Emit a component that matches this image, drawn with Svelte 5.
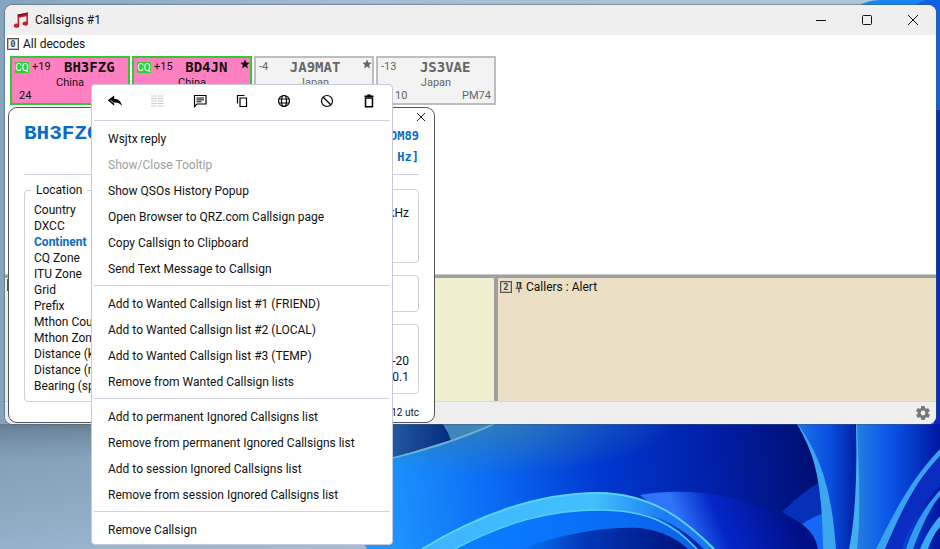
<script>
	/* --------------- decoded callsigns --------------- */
	let decodes = [
		{ call: 'BH3FZG', snr: '+19', country: 'China', zone: '24', grid: '', cq: true, star: false },
		{ call: 'BD4JN', snr: '+15', country: 'China', zone: '', grid: '', cq: true, star: true },
		{ call: 'JA9MAT', snr: '-4', country: 'Japan', zone: '', grid: '', cq: false, star: true },
		{ call: 'JS3VAE', snr: '-13', country: 'Japan', zone: '10', grid: 'PM74', cq: false, star: false },
	];

	let location = [
		'Country',
		'DXCC',
		'Continent',
		'CQ Zone',
		'ITU Zone',
		'Grid',
		'Prefix',
		'Mthon Country',
		'Mthon Zone',
		'Distance (km)',
		'Distance (mi)',
		'Bearing (sp)',
	];

	/* --------------- context menu --------------- */
	let tools = ['reply', 'columns', 'message', 'copy', 'globe', 'block', 'trash'];

	let groups = [
		[
			'Wsjtx reply',
			'Show/Close Tooltip',
			'Show QSOs History Popup',
			'Open Browser to QRZ.com Callsign page',
			'Copy Callsign to Clipboard',
			'Send Text Message to Callsign',
		],
		[
			'Add to Wanted Callsign list #1 (FRIEND)',
			'Add to Wanted Callsign list #2 (LOCAL)',
			'Add to Wanted Callsign list #3 (TEMP)',
			'Remove from Wanted Callsign lists',
		],
		[
			'Add to permanent Ignored Callsigns list',
			'Remove from permanent Ignored Callsigns list',
			'Add to session Ignored Callsigns list',
			'Remove from session Ignored Callsigns list',
		],
		['Remove Callsign'],
	];
	let disabled = ['columns', 'Show/Close Tooltip'];
</script>

<div class="desktop">
	<!--------------- wallpaper --------------->
	<svg class="wallpaper" viewBox="0 0 940 549" preserveAspectRatio="none" aria-hidden="true">
		<defs>
			<linearGradient id="sky" x1="0" y1="0" x2="1" y2="0">
				<stop offset="0" stop-color="#86a5bd" />
				<stop offset="0.4" stop-color="#a5bdd4" />
				<stop offset="1" stop-color="#b4c6d6" />
			</linearGradient>
			<linearGradient id="shade" x1="0" y1="424" x2="0" y2="549" gradientUnits="userSpaceOnUse">
				<stop offset="0" stop-color="#5d7386" stop-opacity="0.8" />
				<stop offset="0.3" stop-color="#7f9ab2" stop-opacity="0.4" />
				<stop offset="1" stop-color="#a5bdd8" stop-opacity="0.5" />
			</linearGradient>
			<linearGradient id="bloom" x1="380" y1="500" x2="820" y2="440" gradientUnits="userSpaceOnUse">
				<stop offset="0" stop-color="#1e98ff" />
				<stop offset="0.25" stop-color="#0b6cf4" />
				<stop offset="0.5" stop-color="#0038d0" />
				<stop offset="0.75" stop-color="#0020a8" />
				<stop offset="1" stop-color="#000d70" />
			</linearGradient>
			<radialGradient id="top" cx="0" cy="0" r="1" gradientUnits="userSpaceOnUse" gradientTransform="translate(480 420) scale(200 55)">
				<stop offset="0" stop-color="#3a84a8" stop-opacity="0.8" />
				<stop offset="1" stop-color="#3a84a8" stop-opacity="0" />
			</radialGradient>
			<linearGradient id="ring" x1="420" y1="549" x2="710" y2="549" gradientUnits="userSpaceOnUse">
				<stop offset="0" stop-color="#3fb4ff" />
				<stop offset="0.6" stop-color="#41c0fb" />
				<stop offset="0.85" stop-color="#1d7af4" />
				<stop offset="1" stop-color="#1c78f0" />
			</linearGradient>
			<linearGradient id="inner" x1="480" y1="549" x2="690" y2="549" gradientUnits="userSpaceOnUse">
				<stop offset="0" stop-color="#0a7dff" />
				<stop offset="0.5" stop-color="#0870f8" />
				<stop offset="1" stop-color="#0b62e8" />
			</linearGradient>
			<linearGradient id="core" x1="520" y1="549" x2="680" y2="549" gradientUnits="userSpaceOnUse">
				<stop offset="0" stop-color="#0978fb" />
				<stop offset="0.4" stop-color="#0238b8" />
				<stop offset="1" stop-color="#001480" />
			</linearGradient>
			<linearGradient id="fold" x1="690" y1="549" x2="790" y2="510" gradientUnits="userSpaceOnUse">
				<stop offset="0" stop-color="#2f74fa" />
				<stop offset="0.35" stop-color="#0426c8" />
				<stop offset="1" stop-color="#000f88" />
			</linearGradient>
			<linearGradient id="petal" x1="800" y1="0" x2="860" y2="0" gradientUnits="userSpaceOnUse">
				<stop offset="0" stop-color="#1a70e8" />
				<stop offset="0.5" stop-color="#0a4ee0" />
				<stop offset="1" stop-color="#001a9c" />
			</linearGradient>
			<linearGradient id="petal2" x1="856" y1="0" x2="940" y2="0" gradientUnits="userSpaceOnUse">
				<stop offset="0" stop-color="#2480e0" />
				<stop offset="0.4" stop-color="#0a55ea" />
				<stop offset="1" stop-color="#0016a0" />
			</linearGradient>
			<linearGradient id="flake" x1="393" y1="0" x2="450" y2="0" gradientUnits="userSpaceOnUse">
				<stop offset="0" stop-color="#2258a0" />
				<stop offset="1" stop-color="#062c80" />
			</linearGradient>
		</defs>
		<rect width="940" height="549" fill="url(#sky)" />
		<rect y="424" width="940" height="125" fill="url(#shade)" />
		<path d="M858 6 Q868 0 880 0 H940 V424 H930 V6Z" fill="#1687f2" />
		<path d="M912 6 L926 0 H940 V424 H936 V20Z" fill="#0b62e6" />
		<path d="M934 110 H940 V424 H934Z" fill="#0a2cb8" />
		<path d="M380 424 H443 Q448 431 451 440 L380 462Z" fill="url(#flake)" />
		<path d="M443 424 H492 L451 440 Q448 431 443 424Z" fill="#3f86bd" />
		<path d="M360 465 L380 461 Q446 446 494 424 H940 V549 H367 Q355 530 360 465Z" fill="url(#bloom)" />
		<path d="M380 461 Q446 446 494 424 H690 V480 H380Z" fill="url(#top)" />
		<path d="M380 461 Q446 446 494 424" fill="none" stroke="#63b9d4" stroke-width="1.5" />
		<path d="M640 495 C700 485 745 500 780 515 C812 528 817 545 818 549 H705 Z" fill="url(#fold)" />
		<path d="M422 549 C470 520 530 493 598 493 C655 493 690 525 714 549Z" fill="url(#ring)" />
		<path d="M455 549 C505 522 550 510 600 510 C650 510 675 526 697 549Z" fill="url(#inner)" />
		<path d="M520 549 C560 535 600 526 640 528 C664 531 678 540 688 549Z" fill="url(#core)" />
		<path d="M643 513 C670 520 690 535 704 549 L697 549 C682 530 665 519 643 513Z" fill="#0426b0" />
		<path d="M422 549 C470 520 530 493 598 493 C655 493 690 525 714 549" fill="none" stroke="#5bd4fb" stroke-width="2" />
		<path d="M455 549 C505 522 550 510 600 510 C650 510 675 526 697 549" fill="none" stroke="#55cdfb" stroke-width="1.5" />
		<path d="M782 512 Q802 492 820 482 L824 513 Q812 517 802 524Z" fill="#0730b8" />
		<path d="M802 524 Q812 517 824 513 L830 549 H818 Q816 535 802 524Z" fill="#1766fa" />
		<path d="M797 424 C820 455 828 490 835 549 H852 C858 510 858 465 855 424Z" fill="url(#petal)" />
		<path d="M797 424 C815 455 822 480 823 549 H836 C832 500 826 465 798 424Z" fill="#3ba7ee" />
		<path d="M856 424 H940 V549 H852 C860 510 858 465 856 424Z" fill="url(#petal2)" />
		<path d="M856 424 C857 470 856 515 849 549 H857 C861 515 859 470 857 424Z" fill="#42b0ef" />
		<path d="M940 449 C910 480 893 515 876 549 H885 C898 520 912 485 940 456Z" fill="#3aa0f0" />
		<path d="M940 456 C912 485 898 520 885 549 H902 C910 524 922 505 940 486Z" fill="#0a2cc0" />
		<path d="M940 490 C924 508 914 525 906 549 H913 C922 525 930 508 940 496Z" fill="#339cf2" />
		<path d="M940 516 C932 525 926 535 920 549 H928 C932 538 936 531 940 527Z" fill="#3da8f5" />
	</svg>

	<main class="window">
		<header class="titlebar">
			<svg class="logo" viewBox="0 0 16 16" aria-hidden="true">
				<path d="M4.6 2.6 15 .6v10.8a2.7 2 0 1 1-1.6-1.7V4.3l-7.2 1.5v7.6a2.7 2 0 1 1-1.6-1.6Z" fill="#c3202c" />
				<path d="M4.6 2.6 15 .6v1.6L4.6 4.4Z" fill="#8c1420" />
			</svg>
			<h1>Callsigns #1</h1>
			<div class="controls">
				<button aria-label="Minimize"><svg viewBox="0 0 12 12"><path d="M1 6.5h10" /></svg></button>
				<button aria-label="Maximize"><svg viewBox="0 0 12 12"><rect x="1.5" y="1.5" width="9" height="9" rx="1" /></svg></button>
				<button aria-label="Close"><svg viewBox="0 0 12 12"><path d="m1 1 10 10M11 1 1 11" /></svg></button>
			</div>
		</header>

		<section class="pane decodes">
			<h2><span class="num">0</span>All decodes</h2>
			<div class="cards">
				{#each decodes as d (d.call)}
					<button class="card" class:cq={d.cq}>
						<span class="line">
							{#if d.cq}<span class="badge">CQ</span>{/if}
							<span>{d.snr}</span>
							<strong>{d.call}</strong>
							{#if d.star}
								<span class="star">
									<svg viewBox="0 0 10 10"><path d="m5 .3 1.3 3.1 3.4.3-2.6 2.2.8 3.5L5 7.6 2.1 9.4l.8-3.5L.3 3.7l3.4-.3Z" /></svg>
								</span>
							{/if}
						</span>
						<span class="country">{d.country}</span>
						<span class="foot" class:indent={d.grid}><span>{d.zone}</span><span>{d.grid}</span></span>
					</button>
				{/each}
			</div>
		</section>

		<div class="split">
			<section class="pane calling"><h2><span class="num">1</span></h2></section>
			<section class="pane callers">
				<h2>
					<span class="num">2</span>
					<svg class="pin" viewBox="0 0 8 11"><path d="M1.5.7h5M2.3.7v5M5.7.7v5M5 .7v5M.6 6.2h6.8M4 6.2v4.3" /></svg>
					Callers : Alert
				</h2>
			</section>
		</div>

		<footer class="status">
			<button aria-label="Settings">
				<svg viewBox="2 2 20 20"><path d="M19.4 13c0-.3.1-.7.1-1s0-.7-.1-1l2.1-1.6c.2-.2.2-.4.1-.6l-2-3.5c-.1-.2-.4-.3-.6-.2l-2.5 1c-.5-.4-1.1-.7-1.7-1l-.4-2.6c0-.3-.2-.5-.5-.5h-4c-.2 0-.4.2-.5.4l-.4 2.7c-.6.2-1.1.6-1.7 1l-2.5-1c-.2-.1-.5 0-.6.2l-2 3.5c-.1.2-.1.4.1.6L4.6 11c0 .3-.1.7-.1 1s0 .7.1 1l-2.1 1.6c-.2.2-.2.4-.1.6l2 3.5c.1.2.4.3.6.2l2.5-1c.5.4 1.1.7 1.7 1l.4 2.6c0 .3.2.5.5.5h4c.3 0 .5-.2.5-.4l.4-2.7c.6-.2 1.2-.6 1.7-1l2.5 1c.2.1.5 0 .6-.2l2-3.5c.1-.2.1-.4-.1-.6ZM12 15.5a3.5 3.5 0 1 1 0-7 3.5 3.5 0 0 1 0 7Z" /></svg>
			</button>
		</footer>
	</main>

	<!--------------- callsign tooltip --------------->
	<aside class="tooltip">
		<button class="close" aria-label="Close tooltip"><svg viewBox="0 0 10 10"><path d="m1 1 8 8M9 1 1 9" /></svg></button>
		<div class="head">
			<h3>BH3FZG</h3>
			<p>OM89<br />0 Hz]</p>
		</div>
		<div class="body">
			<fieldset class="location">
				<legend>Location</legend>
				{#each location as row (row)}
					<div class:wanted={row === 'Continent'}>{row}</div>
				{/each}
			</fieldset>
			<div class="side">
				<div class="box freq">kHz</div>
				<div class="box blank"></div>
				<div class="box report">-20<br />0.1</div>
			</div>
		</div>
		<small>12 utc</small>
	</aside>

	<!--------------- context menu --------------->
	<nav class="menu">
		<div class="tools">
			{#each tools as tool (tool)}
				<button aria-label={tool} disabled={disabled.includes(tool)}>
					<svg viewBox="0 0 16 16">
						{#if tool === 'reply'}
							<path class="fill" d="M7.2 2.5v3.2c4.3.3 6.9 2.7 7.8 7.3-1.9-2.7-4.3-3.7-7.8-3.5v3.3L.8 7.3Z" />
							<path d="M3.5 7.2 8 11" stroke="#fff" stroke-width=".8" />
						{:else if tool === 'columns'}
							<path d="M2 3h5.5M2 5.5h5.5M2 8h5.5M2 10.5h5.5M2 13h5.5M9 3h5.5M9 5.5h5.5M9 8h5.5M9 10.5h5.5M9 13h5.5" />
						{:else if tool === 'message'}
							<path d="M2.5 13.5v-11h11.5v8.5H5Z" />
							<path d="M4.5 5h7.5M4.5 6.9h7.5M4.5 8.8h5" stroke-width="1" />
						{:else if tool === 'copy'}
							<path d="M3.5 10.5V2.5h7M6 5h6.5v8.5H6Z" />
						{:else if tool === 'globe'}
							<circle cx="8" cy="8" r="5.5" />
							<ellipse cx="8" cy="8" rx="2.5" ry="5.5" />
							<path d="M3 6h10M3 10h10" />
						{:else if tool === 'block'}
							<circle cx="8" cy="8" r="5.5" />
							<path d="m4 4 8 8" />
						{:else}
							<path d="M3.5 3.2h9M6.2 2.2h3.6" stroke-width="1.5" />
							<path d="M4.5 5h7v8.8h-7Z" stroke-width="1.5" />
						{/if}
					</svg>
				</button>
			{/each}
		</div>
		{#each groups as group}
			<hr />
			{#each group as item (item)}
				<button class="item" disabled={disabled.includes(item)}>{item}</button>
			{/each}
		{/each}
	</nav>
</div>

<style>
	:global(body) {
		margin: 0;
	}

	.desktop {
		position: relative;
		box-sizing: border-box;
		display: flex;
		min-height: 100vh;
		padding: 5px 4px 125px 5px;
		overflow: hidden;
		font-family: Roboto, 'Open Sans', sans-serif;
		font-size: 12px;
		line-height: 16px;
		color: #111;
	}

	.wallpaper {
		position: absolute;
		inset: 0;
		width: 100%;
		height: 100%;
	}

	h1,
	h2,
	h3,
	p {
		margin: 0;
		font-size: 12px;
		font-weight: 400;
	}

	button {
		padding: 0;
		border: none;
		background: none;
		color: inherit;
		font: inherit;
	}

	svg {
		display: block;
		flex: none;
	}

	/* --------------- window --------------- */
	.window {
		position: relative;
		display: flex;
		flex: 1;
		flex-direction: column;
		overflow: hidden;
		border-radius: 8px;
		background: #fff;
		box-shadow: 0 0 1px 1px rgba(70, 90, 110, 0.5);
	}

	.titlebar {
		display: flex;
		align-items: center;
		height: 30px;
		padding-left: 8px;
		background: #efefef;
	}

	.logo {
		width: 16px;
		height: 16px;
		margin-right: 6px;
	}

	.controls {
		display: flex;
		margin-left: auto;
	}

	.controls button {
		display: grid;
		place-items: center;
		width: 46px;
		height: 28px;
	}

	.controls svg {
		width: 12px;
		height: 12px;
		fill: none;
		stroke: #111;
	}

	.pane h2 {
		display: flex;
		align-items: center;
		gap: 4px;
		padding: 1px 2px 0;
	}

	.num {
		box-sizing: border-box;
		width: 12px;
		height: 12px;
		border: 1px solid #555;
		outline: 1px solid #bbb;
		outline-offset: -2px;
		color: #444;
		font: bold 9px/10px 'DejaVu Sans Mono', monospace;
		text-align: center;
	}

	.decodes {
		flex: 1;
		border-bottom: 1px solid #ccc;
	}

	.cards {
		display: flex;
		flex-wrap: wrap;
		gap: 2px;
		padding: 4px 5px;
	}

	.card {
		box-sizing: border-box;
		display: flex;
		flex-direction: column;
		width: 120px;
		height: 49px;
		border: 2px solid #bebebe;
		background: #f3f3f3;
		color: #666;
		font-size: 11px;
		line-height: 14px;
		text-align: left;
	}

	.card.cq {
		border-color: #32c832;
		background: #ff80c0;
		color: #111;
	}

	.line {
		display: flex;
		align-items: center;
		height: 18px;
		padding-left: 3px;
	}

	.badge {
		width: 14px;
		margin-right: 3px;
		background: #32cd32;
		color: #fff;
		font-size: 10px;
		line-height: 11px;
		text-align: center;
	}

	.line strong {
		flex: 1;
		font: bold 14px/18px 'DejaVu Sans Mono', monospace;
		text-align: center;
	}

	.star {
		align-self: flex-start;
		width: 10px;
		padding-top: 1px;
	}

	.star svg {
		width: 10px;
		height: 10px;
		fill: currentColor;
	}

	.country {
		height: 13px;
		text-align: center;
	}

	.foot {
		display: flex;
		justify-content: space-between;
		padding: 0 3px 0 7px;
	}

	.foot.indent {
		padding-left: 17px;
	}

	.split {
		display: grid;
		grid-template-columns: 489fr 438fr;
		gap: 4px;
		height: 123px;
		border-top: 3px solid #a0a0a0;
		background: #a0a0a0;
	}

	.calling {
		background: #f0f0d0;
	}

	.callers {
		background: #ebdfc5;
	}

	.pin {
		width: 8px;
		height: 11px;
		margin: 0 -1px;
		fill: none;
		stroke: #222;
	}

	.status {
		display: flex;
		align-items: center;
		justify-content: flex-end;
		height: 22px;
		padding-right: 6px;
		border-top: 1px solid #d8d8d8;
		background: #efefef;
	}

	.status svg {
		width: 14px;
		height: 14px;
		fill: #777;
	}

	/* --------------- tooltip --------------- */
	.tooltip {
		position: absolute;
		top: 107px;
		left: 8px;
		box-sizing: border-box;
		width: 427px;
		padding: 14px 15px 1px;
		border: 1px solid #555;
		border-radius: 9px;
		background: #fff;
	}

	.close {
		position: absolute;
		top: 4px;
		right: 8px;
	}

	.close svg {
		width: 10px;
		height: 10px;
		fill: none;
		stroke: #222;
	}

	.head {
		display: flex;
		justify-content: space-between;
		height: 52px;
		border-bottom: 1px solid #d0d0e0;
		color: #0a6cc4;
	}

	.head h3 {
		font: bold 21px/24px 'Liberation Mono', monospace;
	}

	.head p {
		padding-top: 4px;
		font: bold 12px/21px 'DejaVu Sans Mono', monospace;
		text-align: right;
	}

	.body {
		display: flex;
		gap: 12px;
		padding-top: 7px;
	}

	fieldset {
		box-sizing: border-box;
		flex: 1;
		margin: 0;
		padding: 4px 9px 7px;
		border: 1px solid #d0d0d0;
		border-radius: 4px;
	}

	legend {
		margin-left: -3px;
		padding: 0 5px;
	}

	.wanted {
		color: #0a6cc4;
		font-weight: 700;
	}

	.side {
		display: flex;
		flex: 1;
		flex-direction: column;
		gap: 12px;
		padding-top: 7px;
	}

	.box {
		box-sizing: border-box;
		padding: 0 9px;
		border: 1px solid #d0d0d0;
		border-radius: 4px;
		text-align: right;
	}

	.freq {
		height: 74px;
		padding-top: 15px;
	}

	.blank {
		height: 37px;
	}

	.report {
		height: 70px;
		padding-top: 28px;
	}

	.tooltip small {
		display: block;
		padding-top: 3px;
		font-size: 10px;
		text-align: right;
	}

	/* --------------- context menu --------------- */
	.menu {
		position: absolute;
		top: 84px;
		left: 91px;
		box-sizing: border-box;
		width: 302px;
		padding-bottom: 1px;
		border: 1px solid #c8c8dc;
		border-radius: 4px;
		background: #fff;
	}

	.tools {
		display: grid;
		grid-template-columns: repeat(7, 1fr);
		height: 32px;
		padding: 0 2px;
	}

	.tools button {
		display: grid;
		place-items: center;
	}

	.tools svg {
		width: 16px;
		height: 16px;
		fill: none;
		stroke: #000;
		stroke-width: 1.2;
	}

	.tools .fill {
		fill: #000;
		stroke: none;
	}

	.tools button:disabled svg {
		stroke: #ccc;
	}

	hr {
		height: 1px;
		margin: 3px 2px 5px;
		border: none;
		background: #d0d0e0;
	}

	.item {
		display: block;
		width: 100%;
		height: 26px;
		padding: 0 16px;
		text-align: left;
	}

	.item:disabled {
		color: #a0a0a0;
	}
</style>
